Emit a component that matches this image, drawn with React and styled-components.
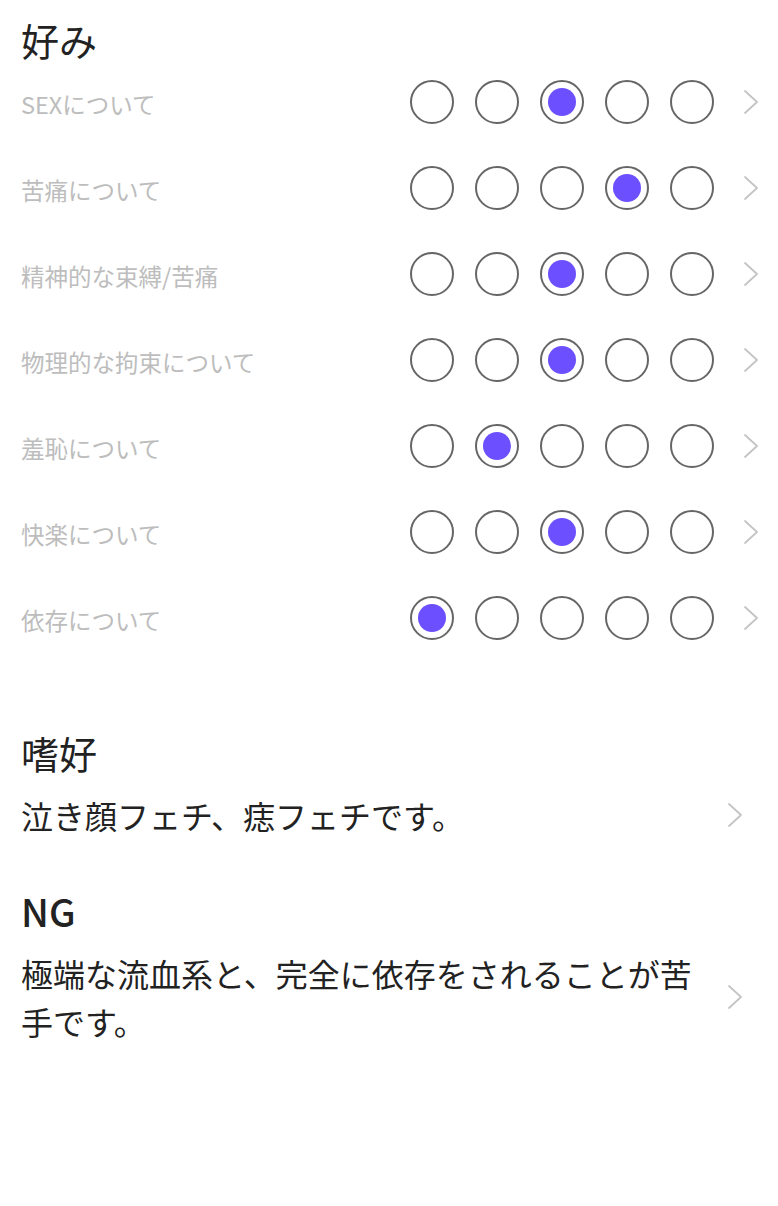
import React from "react";
import styled, { createGlobalStyle } from "styled-components";

const GlobalStyle = createGlobalStyle`
  html, body {
    margin: 0;
    padding: 0;
    background: #ffffff;
  }
  body {
    font-family: "Noto Sans CJK JP", "Noto Sans", sans-serif;
    color: #222222;
  }
`;

const preferences = [
  { label: "SEXについて", value: 2 },
  { label: "苦痛について", value: 3 },
  { label: "精神的な束縛/苦痛", value: 2 },
  { label: "物理的な拘束について", value: 2 },
  { label: "羞恥について", value: 1 },
  { label: "快楽について", value: 2 },
  { label: "依存について", value: 0 },
];

function Chevron() {
  return (
    <ChevronIcon viewBox="0 0 16 26" aria-hidden="true">
      <polyline points="2,2 14,13 2,24" />
    </ChevronIcon>
  );
}

function App() {
  return (
    <Page>
      <GlobalStyle />
      <Title>好み</Title>
      <RatingList>
        {preferences.map((item) => (
          <RatingRow key={item.label}>
            <Label>{item.label}</Label>
            <Choices>
              {[0, 1, 2, 3, 4].map((i) => (
                <Radio key={i} $checked={i === item.value} />
              ))}
            </Choices>
            <Chevron />
          </RatingRow>
        ))}
      </RatingList>

      <Section $top={70}>
        <SectionTitle>嗜好</SectionTitle>
        <TextRow>
          <Body>泣き顔フェチ、痣フェチです。</Body>
          <Chevron />
        </TextRow>
      </Section>

      <Section $top={50}>
        <SectionTitle $strong>NG</SectionTitle>
        <TextRow>
          <Body>極端な流血系と、完全に依存をされることが苦手です。</Body>
          <Chevron />
        </TextRow>
      </Section>
    </Page>
  );
}

const Page = styled.div`
  padding: 21px 19px 0 21px;
  min-height: 1206px;
  box-sizing: border-box;
`;

const Title = styled.h1`
  margin: 0;
  font-size: 38px;
  font-weight: 400;
  line-height: 38px;
  color: #222222;
`;

const RatingList = styled.div`
  display: flex;
  flex-direction: column;
`;

const RatingRow = styled.div`
  display: flex;
  align-items: center;
  height: 86px;
`;

const Label = styled.div`
  flex: 1;
  font-size: 23.5px;
  color: #bdbdbd;
  white-space: nowrap;
  padding-top: 3px;
`;

const Choices = styled.div`
  display: flex;
  gap: 21px;
  margin-right: 29px;
`;

const Radio = styled.span`
  width: 44px;
  height: 44px;
  box-sizing: border-box;
  border: 2px solid #666666;
  border-radius: 50%;
  display: flex;
  align-items: center;
  justify-content: center;

  &::after {
    content: "";
    width: 28px;
    height: 28px;
    border-radius: 50%;
    background: #6c4fff;
    display: ${(p) => (p.$checked ? "block" : "none")};
  }
`;

const ChevronIcon = styled.svg`
  width: 16px;
  height: 26px;
  flex-shrink: 0;
  fill: none;
  stroke: #c4c4c4;
  stroke-width: 1.8;
  stroke-linecap: round;
  stroke-linejoin: round;
`;

const Section = styled.section`
  margin-top: ${(p) => p.$top}px;
  padding-right: 16px;
`;

const SectionTitle = styled.h2`
  margin: 0 0 16px;
  font-size: 38px;
  font-weight: ${(p) => (p.$strong ? 500 : 400)};
  line-height: 44px;
  color: #222222;
`;

const TextRow = styled.div`
  display: flex;
  align-items: center;
  gap: 28px;
`;

const Body = styled.p`
  flex: 1;
  margin: 0;
  font-size: 32px;
  line-height: 48px;
  color: #222222;
`;

export default App;
